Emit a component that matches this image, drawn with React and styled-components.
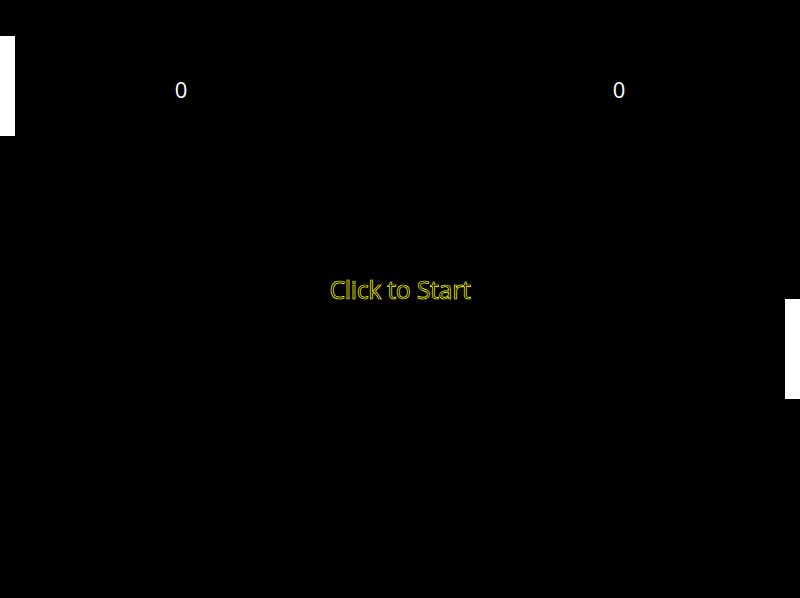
import React from "react";
import styled, { createGlobalStyle } from "styled-components";

const Global = createGlobalStyle`
  html, body { margin: 0; padding: 0; background: #000; }
  body { font-family: "Open Sans", "Noto Sans", sans-serif; }
`;

const Board = styled.div`
  position: relative;
  width: 800px;
  height: 598px;
  background: #000;
  overflow: hidden;
  display: flex;
  flex-direction: column;
`;

const ScoreRow = styled.div`
  width: 462px;
  margin: 0 auto;
  padding-top: 74px;
  display: flex;
  justify-content: space-between;
`;

const Score = styled.div`
  width: 24px;
  text-align: center;
  color: #fff;
  font-size: 22px;
  line-height: 30px;
`;

const Message = styled.div`
  margin-top: 168px;
  text-align: center;
  font-size: 25px;
  line-height: 34px;
  color: transparent;
  -webkit-text-stroke: 0.7px #ffff00;
  letter-spacing: -0.35px;
`;

const Paddle = styled.div`
  position: absolute;
  width: 15px;
  height: 100px;
  background: #fff;
  top: ${(p) => p.$top}px;
  ${(p) => (p.$side === "left" ? "left: 0;" : "right: 0;")}
`;

export default function App() {
  return (
    <Board>
      <Global />
      <ScoreRow>
        <Score>0</Score>
        <Score>0</Score>
      </ScoreRow>
      <Message>Click to Start</Message>
      <Paddle $side="left" $top={36} />
      <Paddle $side="right" $top={299} />
    </Board>
  );
}
